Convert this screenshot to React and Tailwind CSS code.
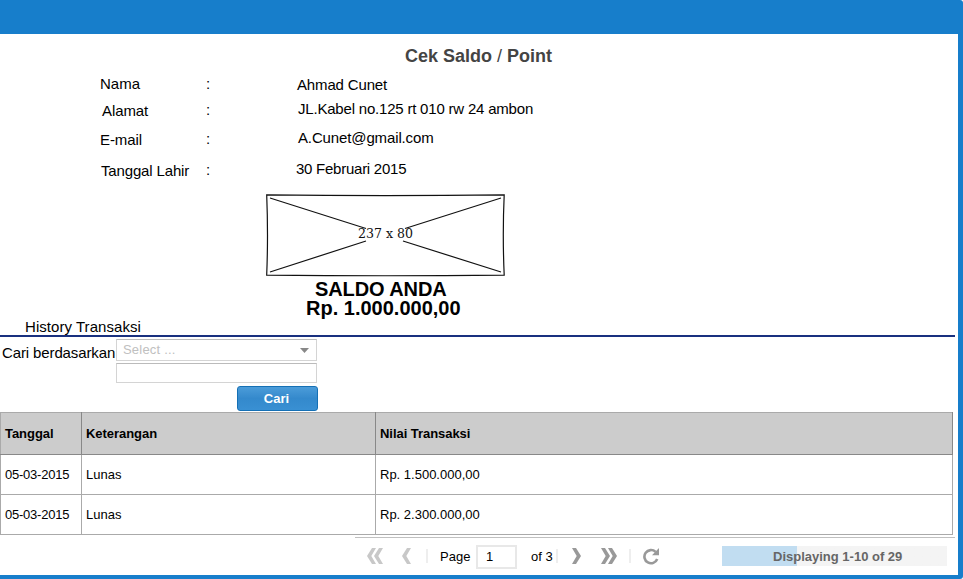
const profile = [
  { label: "Nama", value: "Ahmad Cunet", l: "mt-0", c: "mt-0", v: "mt-0.5 ml-px tracking-[-0.15px]" },
  { label: "Alamat", value: "JL.Kabel no.125 rt 010 rw 24 ambon", l: "mt-[9px] ml-0.5 tracking-[-0.1px]", c: "mt-2", v: "mt-1.5 ml-0.5 tracking-[-0.2px]" },
  { label: "E-mail", value: "A.Cunet@gmail.com", l: "mt-[11px] tracking-[-0.1px]", c: "mt-[11px]", v: "mt-[11px] ml-0.5 tracking-[-0.13px]" },
  { label: "Tanggal Lahir", value: "30 Februari 2015", l: "mt-[13px] ml-px tracking-[-0.15px]", c: "mt-[13px]", v: "mt-[13px] tracking-[-0.25px]" },
];

const rows = [
  ["05-03-2015", "Lunas", "Rp. 1.500.000,00"],
  ["05-03-2015", "Lunas", "Rp. 2.300.000,00"],
];

function Profile() {
  return (
    <div className="mt-2 flex h-[112px] text-[15px] leading-[18px]">
      <div className="ml-[100px] flex w-[106px] flex-col pt-px">
        {profile.map((p) => <span key={p.label} className={`whitespace-nowrap ${p.l}`}>{p.label}</span>)}
      </div>
      <div className="flex w-[90px] flex-col pt-px">
        {profile.map((p) => <span key={p.label} className={p.c}>:</span>)}
      </div>
      <div className="flex flex-col">
        {profile.map((p) => <span key={p.label} className={`whitespace-nowrap ${p.v}`}>{p.value}</span>)}
      </div>
    </div>
  );
}

function Placeholder() {
  return (
    <svg className="ml-[265px] mt-[7px] block shrink-0" width="242" height="84" viewBox="265 193 242 84" fill="none" stroke="#111" strokeWidth="1.2">
      <path d="M266.7 194.8Q385 196.3 504.2 194.8Q502.4 235 504.2 275.1Q385 276.4 266.7 275.1Q268.3 235 266.7 194.8Z" />
      <path d="M270 198L366 228.5M501 198L405 228.5M270 272L366 241M501 272L403 241" />
      <text x="385.5" y="238" textAnchor="middle" fontSize="13.5" fontFamily="DejaVu Serif, serif" textLength="55" lengthAdjust="spacingAndGlyphs" fill="#111" stroke="none">237 x 80</text>
    </svg>
  );
}

function Chevron({ double, left, color }) {
  return (
    <svg width={double ? 16 : 9} height="16" viewBox={double ? "0 0 16 16" : "0 0 9 16"} className={left ? "block -scale-x-100" : "block"} fill={color}>
      <path d="M0 0H4L9 8L4 16H0L4.7 8Z" />
      {double && <path d="M7 0H11L16 8L11 16H7L11.7 8Z" />}
    </svg>
  );
}

function Pager() {
  return (
    <div className="ml-[355px] mt-0.5 flex h-[37px] w-[600px] items-center border-t border-[#c0c0c0] text-[13px]">
      <div className="ml-3"><Chevron double left color="#c8c8c8" /></div>
      <div className="ml-[19px]"><Chevron left color="#c8c8c8" /></div>
      <div className="ml-[15px] h-[14px] w-0.5 bg-[#eeeeee]" />
      <span className="ml-3 w-[36px] pt-px">Page</span>
      <div className="mt-0.5 flex h-6 w-[41px] items-center border-2 border-[#e8e8e8] pl-2">1</div>
      <span className="ml-[14px] w-[25px] whitespace-nowrap pt-px">of 3</span>
      <div className="h-[14px] w-0.5 bg-[#eeeeee]" />
      <div className="ml-[14px]"><Chevron color="#999" /></div>
      <div className="ml-5"><Chevron double color="#999" /></div>
      <div className="ml-3 h-[14px] w-0.5 bg-[#eeeeee]" />
      <svg className="ml-3 block" width="17" height="17" viewBox="0 0 17 17">
        <path d="M12.6 3.9A6.6 6.6 0 1 0 14.2 11" fill="none" stroke="#999" strokeWidth="2.6" />
        <path d="M16 0V7.2H9Z" fill="#999" />
      </svg>
      <div className="ml-auto mr-2 flex h-5 w-[225px] items-center whitespace-nowrap bg-linear-to-r from-[#c1ddf1] from-[33.33%] to-[#f4f4f4] to-[33.33%] pl-[51px] pt-px font-bold text-[#666]">
        Displaying 1-10 of 29
      </div>
    </div>
  );
}

export default function App() {
  return (
    <div className="h-[579px] w-[963px] overflow-hidden rounded-r-[3px] bg-[#177ecb] pt-[34px] font-['Liberation_Sans',Arial,sans-serif] text-black">
      <main className="flex h-[541px] w-[958px] flex-col bg-white">
        <h1 className="ml-[405px] mt-3 h-5 whitespace-nowrap text-[18px] font-bold leading-5 text-[#444]">
          Cek Saldo <span className="font-normal">/</span> Point
        </h1>
        <Profile />
        <Placeholder />
        <div className="h-[41px] whitespace-nowrap pt-[3px] text-[20px] font-bold leading-[19px]">
          <div className="ml-[315px] tracking-[-0.1px]">SALDO ANDA</div>
          <div className="ml-[306px]">Rp. 1.000.000,00</div>
        </div>
        <h2 className="ml-[25px] h-[17px] whitespace-nowrap text-[15px] leading-[18px] tracking-[0.05px]">History Transaksi</h2>
        <div className="h-0.5 w-[955px] shrink-0 bg-[#19307f]" />
        <div className="mt-0.5 flex h-[73px] shrink-0">
          <label className="ml-0.5 w-[114px] whitespace-nowrap pt-[5px] text-[15px] leading-[18px] tracking-[-0.12px]">Cari berdasarkan</label>
          <div className="w-[202px]">
            <div className="flex h-[22px] w-[201px] items-center justify-between border border-[#d4d4d4] border-t-[#bbb] pl-1.5 pr-[7px] text-[13px] text-[#c0c0c0]">
              <span className="tracking-[0.2px]">Select ...</span>
              <svg width="9" height="5" viewBox="0 0 9 5"><path d="M0 0H9L4.5 5Z" fill="#888" /></svg>
            </div>
            <div className="mt-0.5 h-5 w-[201px] border border-[#d4d4d4] border-t-[#bbb]" />
            <button className="ml-[121px] mt-[3px] block h-[25px] w-[81px] rounded-[3px] border border-[#1570b5] bg-linear-to-b from-[#4b9cd9] from-0% via-[#3489cc] via-50% to-[#3990d3] pr-[2px] text-[13px] font-bold leading-[23px] text-white">Cari</button>
          </div>
        </div>
        <table className="h-[123px] w-[953px] table-fixed border-collapse text-left text-[13px]">
          <colgroup><col className="w-[81px]" /><col className="w-[294px]" /><col /></colgroup>
          <thead>
            <tr className="h-[42px] bg-[#ccc]">
              {["Tanggal", "Keterangan", "Nilai Transaksi"].map((h) => <th key={h} className="border border-[#888] border-t-[#aaa] px-1 py-0 tracking-[-0.05px] first:border-l-[#aaa]">{h}</th>)}
            </tr>
          </thead>
          <tbody>
            {rows.map((r) => (
              <tr key={r[2]} className="h-10">
                {r.map((cell) => <td key={cell} className="border border-[#aaa] px-1 py-0 first:tracking-[-0.23px]">{cell}</td>)}
              </tr>
            ))}
          </tbody>
        </table>
        <Pager />
      </main>
    </div>
  );
}
